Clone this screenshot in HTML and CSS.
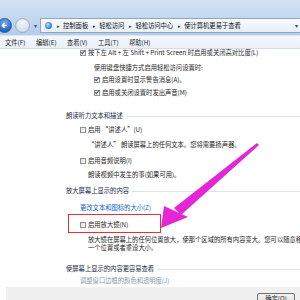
FILE: index.html
```html
<!DOCTYPE html>
<html lang="zh-CN">
<head>
	<meta charset="utf-8" />
	<title>使计算机更易于查看</title>
	<link rel="stylesheet" href="styles.css">
</head>
<body>
	<div class="window">
		<div class="chrome">
			<div class="nav">
				<div class="btn-back">
					<svg width="15" height="15" viewBox="0 0 15 15"><path d="M10 7.5H5M7.5 5L5 7.5 7.5 10" stroke="#fff" stroke-width="1.6" fill="none"/></svg>
				</div>
				<div class="btn-fwd"></div>
				<div class="nav-drop">▾</div>
				<div class="address">
					<span class="addr-icon"></span>
					<span class="sep">▸</span><span>控制面板</span>
					<span class="sep">▸</span><span>轻松访问</span>
					<span class="sep">▸</span><span>轻松访问中心</span>
					<span class="sep">▸</span><span>使计算机更易于查看</span>
					<span class="addr-drop">▾</span>
				</div>
			</div>
		</div>

		<div class="menubar">
			<span>文件(F)</span>
			<span>编辑(E)</span>
			<span>查看(V)</span>
			<span>工具(T)</span>
			<span>帮助(H)</span>
		</div>

		<div class="content">
			<div class="row ind-1"><span class="cb on"></span>按下左 Alt + 左 Shift + Print Screen 时启用或关闭高对比度(L)</div>
			<div class="row ind-2 g7">使用键盘快捷方式启用轻松访问设置时:</div>
			<div class="row ind-2 g4"><span class="cb on"></span>启用设置时显示警告消息(A)。</div>
			<div class="row ind-2 g5"><span class="cb on"></span>启用或关闭设置时发出声音(M)</div>

			<div class="group g15"><span>朗读听力文本和描述</span><i></i></div>
			<div class="row ind-3 g6"><span class="cb"></span>启用 “讲述人”(U)</div>
			<div class="row ind-4 g7">“讲述人” 朗读屏幕上的任何文本。您将需要扬声器。</div>
			<div class="row ind-3 g8"><span class="cb"></span>启用音频说明(I)</div>
			<div class="row ind-4 g6">朗读视频中发生的事(如果可用)。</div>

			<div class="group g8"><span>放大屏幕上显示的内容</span><i></i></div>
			<div class="row ind-3 g9"><a class="link">更改文本和图标的大小(Z)</a></div>
			<div class="row ind-3 g9"><span class="cb"></span>启用放大镜(N)</div>
			<div class="row ind-4 g7">放大镜在屏幕上的任何位置放大，使那个区域的所有内容变大。您可以随意移动</div>
			<div class="row ind-4">一个位置或者重设大小。</div>

			<div class="group g13"><span>使屏幕上显示的内容更容易查看</span><i></i></div>
			<div class="row ind-3 g4"><a class="link muted">调整窗口边框的颜色和透明度(J)</a></div>

			<div class="footer">
				<div class="btn-ok">确定(O)</div>
			</div>
		</div>

		<div class="mark-box"></div>
		<svg class="mark-arrow" width="300" height="300" viewBox="0 0 300 300">
			<polygon points="257,143 259,145 181,215 174,208" fill="#e427d6"/>
			<polygon points="161,228 164,206 188,217" fill="#e427d6"/>
		</svg>
	</div>
</body>
</html>
```

FILE: styles.css
```css
/* global */
	html, body {margin:0;padding:0;}
	body {
		width: 300px;
		height: 300px;
		overflow: hidden;
		background: #fff;
		color: #1e1e1e;
		font-family: "Noto Sans CJK SC", "Noto Sans", sans-serif;
		font-size: 6.3px;
	}
	*,
	:after,
	:before {
		box-sizing: border-box;
	}
/* global end */

/* window chrome */
	.window {position:relative;width:300px;height:300px;overflow:hidden;}

	.chrome {
		height: 35px;
		padding-top: 17px;
		background: linear-gradient(#d3e3f4 0%, #c3d8ef 50%, #b4cde9 100%);
	}
	.nav {display:flex;align-items:center;height:16px;}
	.btn-back {
		display: flex;
		align-items: center;
		justify-content: center;
		width: 15px;
		height: 15px;
		margin-left: -3px;
		border-radius: 50%;
		border: 1px solid #2e5f9e;
		background: radial-gradient(circle at 50% 30%, #7fb2ee 0%, #2d6ec8 60%, #1c4f9a 100%);
	}
	.btn-fwd {
		width: 15px;
		height: 15px;
		margin-left: 3px;
		border-radius: 50%;
		border: 1px solid #9aaec6;
		background: radial-gradient(circle at 50% 30%, #f4f7fb 0%, #d6e0ec 70%, #c2cfdf 100%);
	}
	.nav-drop {width:8px;margin-left:1px;font-size:6px;color:#3d5a80;text-align:center;}
	.address {
		display: flex;
		align-items: center;
		flex: 1;
		height: 15px;
		margin-left: 1px;
		padding-left: 4px;
		border: 1px solid #8ea6c2;
		border-right: 0;
		background: linear-gradient(#f7f9fc, #e9eff7);
		color: #111;
		white-space: nowrap;
	}
	.address .addr-icon {
		width: 7px;
		height: 7px;
		border-radius: 50%;
		background: radial-gradient(circle at 40% 40%, #bfe0ff 0%, #3a7fd6 60%, #1f57a8 100%);
	}
	.address .sep {margin:0 3px 0 5px;font-size:5px;color:#333;}
	.address .addr-drop {margin-left:auto;padding-right:2px;font-size:6px;color:#444;}

	.menubar {
		display: flex;
		gap: 9px;
		height: 14px;
		align-items: center;
		padding-left: 5px;
		background: linear-gradient(#f6f9fd 0%, #eaf0f8 100%);
		border-top: 1px solid #dce6f3;
		border-bottom: 1px solid #d5dfeb;
		white-space: nowrap;
	}
	.menubar span {width:22px;}
/* window chrome end */

/* content */
	.content {white-space:nowrap;}
	.row {display:flex;align-items:center;height:8px;line-height:8px;}
	.ind-1 {padding-left:80px;}
	.ind-2 {padding-left:94px;}
	.ind-3 {padding-left:80px;}
	.ind-4 {padding-left:88px;}

	.g4 {margin-top:4px;}
	.g5 {margin-top:5px;}
	.g6 {margin-top:6px;}
	.g7 {margin-top:7px;}
	.g8 {margin-top:8px;}
	.g9 {margin-top:9px;}
	.g13 {margin-top:13px;}
	.g15 {margin-top:15px;}

	.cb {
		position: relative;
		width: 6px;
		height: 6px;
		margin-right: 2px;
		border: 1px solid #8e8f8f;
		background: linear-gradient(135deg, #dcdcdc, #fbfbfb);
	}
	.cb.on:after {
		content: "";
		position: absolute;
		left: 1px;
		top: -1px;
		width: 2px;
		height: 4px;
		border: solid #2a4c8c;
		border-width: 0 1px 1px 0;
		transform: rotate(40deg);
	}

	.group {display:flex;align-items:center;height:8px;line-height:8px;padding-left:66px;color:#1b2a4a;}
	.group i {flex:1;height:1px;margin-left:3px;background:#d9e2ea;}

	.link {color:#0a64c8;}
	.link.muted {color:#8797ad;}

	.footer {
		display: flex;
		justify-content: flex-end;
		height: 20px;
		margin-top: 2px;
		margin-left: 6px;
		padding: 6px 5px 0 0;
		background: #f0f0f0;
	}
	.btn-ok {
		width: 38px;
		height: 12px;
		line-height: 10px;
		border: 1px solid #707070;
		border-radius: 2px;
		background: linear-gradient(#f3f3f3, #dddddd);
		text-align: center;
	}
/* content end */

/* annotation */
	.mark-box {
		position: absolute;
		left: 68px;
		top: 214px;
		width: 93px;
		height: 19px;
		border: 1.5px solid #e4312f;
	}
	.mark-arrow {position:absolute;left:0;top:0;pointer-events:none;}
/* annotation end */
```
